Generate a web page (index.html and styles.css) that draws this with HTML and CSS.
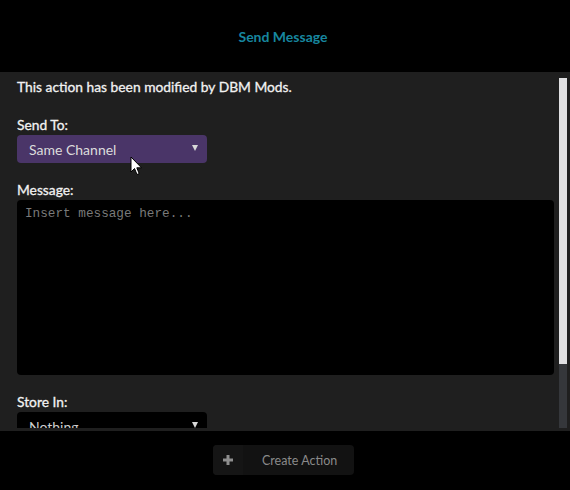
FILE: index.html
```html
<!DOCTYPE html>
<html>
<head>
<meta charset="utf-8">
<link rel="stylesheet" href="styles.css">
</head>
<body>
<div class="app">
  <header class="header">
    <h1 class="title">Send Message</h1>
  </header>
  <main class="panel">
    <div class="content">
      <p class="notice">This action has been modified by DBM Mods.</p>
      <div class="field">
        <label class="label">Send To:</label>
        <div class="select purple">
          <span>Same Channel</span>
          <span class="arrow"></span>
        </div>
      </div>
      <div class="field">
        <label class="label">Message:</label>
        <div class="textarea"><span class="placeholder">Insert message here...</span></div>
      </div>
      <div class="field">
        <label class="label">Store In:</label>
        <div class="select dark">
          <span>Nothing</span>
          <span class="arrow"></span>
        </div>
      </div>
    </div>
    <div class="scrollbar"><div class="thumb"></div></div>
    <svg class="cursor" width="13" height="20" viewBox="0 0 13 20">
      <path d="M1 1 L1 16 L4.5 12.5 L7 18.5 L9.2 17.6 L6.8 11.8 L11.5 11.8 Z" fill="#fff" stroke="#000" stroke-width="1" stroke-linejoin="round"/>
    </svg>
  </main>
  <footer class="footer">
    <div class="button">
      <span class="plus">
        <svg width="10" height="10" viewBox="0 0 10 10"><rect x="3.5" y="0" width="3" height="10" fill="#8e8e8e"/><rect x="0" y="3.5" width="10" height="3" fill="#8e8e8e"/></svg>
      </span>
      <span class="btn-label">Create Action</span>
    </div>
  </footer>
</div>
</body>
</html>
```
FILE: styles.css
```css
* { box-sizing: border-box; }
html, body {
  margin: 0;
  padding: 0;
  background: #000;
  font-family: Lato, "Open Sans", sans-serif;
}
.app {
  width: 570px;
  height: 490px;
  display: flex;
  flex-direction: column;
}
.header {
  height: 72px;
  display: flex;
  align-items: center;
  justify-content: center;
  padding-right: 4px;
}
.title {
  margin: 0;
  font-size: 14px;
  font-weight: 700;
  color: #17869f;
}
.panel {
  position: relative;
  height: 359px;
  background: #1f1f1f;
  display: flex;
  overflow: hidden;
  padding-bottom: 3px;
}
.content {
  flex: 1;
  padding: 6px 5px 0 17px;
  overflow: hidden;
  color: #f0f0f0;
}
.notice {
  margin: 0;
  font-size: 13.8px;
  line-height: 17px;
  color: #f2f2f2;
  -webkit-text-stroke: 0.3px #f2f2f2;
}
.field {
  margin-top: 21px;
}
.field + .field {
  margin-top: 18px;
}
.label {
  display: block;
  font-size: 13.8px;
  line-height: 17px;
  margin-bottom: 2px;
  color: #f2f2f2;
  -webkit-text-stroke: 0.3px #f2f2f2;
}
.select {
  width: 190px;
  height: 28px;
  border-radius: 4px;
  display: flex;
  align-items: center;
  justify-content: space-between;
  padding: 0 9px 0 12px;
  font-size: 14px;
  color: #dcdcdc;
}
.select.purple { background: #4a3568; }
.select.dark { background: #000; color: #cfcfcf; margin-top: 1px; }
.arrow {
  width: 0;
  height: 0;
  border-left: 3.5px solid transparent;
  border-right: 3.5px solid transparent;
  border-top: 6px solid #d8d8d8;
  margin-top: -2px;
}
.textarea {
  height: 175px;
  background: #000;
  border-radius: 4px;
  padding: 1px 8px;
}
.placeholder {
  font-family: "Liberation Mono", "DejaVu Sans Mono", monospace;
  font-size: 12.7px;
  color: #7a7a7a;
}
.scrollbar {
  width: 8px;
  margin: 6px 3px 0 0;
  background: #35373b;
  flex: none;
}
.thumb {
  height: 286px;
  background: #e0e0e2;
}
.cursor {
  position: absolute;
  left: 130px;
  top: 84px;
}
.footer {
  flex: 1;
  display: flex;
  justify-content: center;
  align-items: flex-start;
  padding-top: 14px;
  padding-right: 3px;
}
.button {
  width: 141px;
  height: 30px;
  background: #121212;
  border-radius: 4px;
  display: flex;
  align-items: center;
  overflow: hidden;
}
.plus {
  width: 30px;
  height: 100%;
  display: flex;
  align-items: center;
  justify-content: center;
  background: #151515;
}
.plus svg { display: block; }
.btn-label {
  margin-left: 19px;
  font-size: 12.5px;
  color: #8a8a8a;
}
```
